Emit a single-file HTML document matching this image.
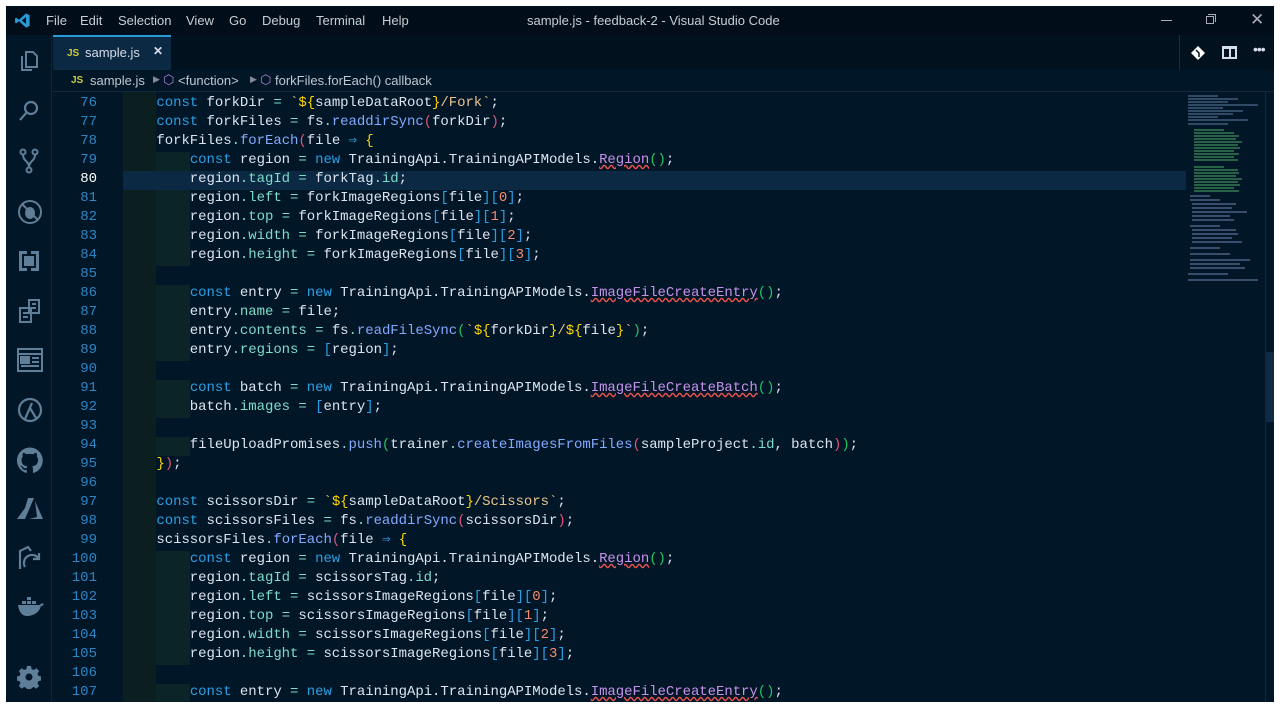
<!DOCTYPE html>
<html><head><meta charset="utf-8"><style>
*{margin:0;padding:0;box-sizing:border-box}
body{width:1280px;height:707px;background:#fff;position:relative;overflow:hidden;font-family:"Liberation Sans",sans-serif}
#win{position:absolute;left:6px;top:6px;width:1268px;height:696px;background:#011627;overflow:hidden}
#title{position:absolute;left:0;top:0;width:1268px;height:29px;background:#010e1a;color:#c8cdd3;font-size:13px}
#title .m{position:absolute;top:7px}
#act{position:absolute;left:0;top:29px;width:46px;height:667px;background:#011627;border-right:1px solid #0d2538}
#act svg{position:absolute;left:11px}
#tabs{position:absolute;left:47px;top:29px;right:0;height:35px;background:#01111d}
#tab{position:absolute;left:0;top:0;width:118px;height:35px;background:#0b2942;border-top:2px solid #2b9ad6;color:#d6deeb;font-size:13px}
#bc{position:absolute;left:47px;top:64px;right:0;height:22px;color:#c0c8d2;font-size:13px;border-bottom:1px solid #0f2a40}
.js{color:#cbcb41;font-weight:bold;font-size:10px}
#code{position:absolute;left:0;top:0;font-family:"Liberation Mono",monospace;font-size:14px;color:#d6deeb}
.ln{position:absolute;left:47px;width:44px;text-align:right;color:#2c86c6;font-family:"Liberation Mono",monospace;font-size:14px;height:19px;line-height:19px}
.l{position:absolute;left:117px;height:19px;line-height:19px;white-space:pre;letter-spacing:-0.05px}
.g2{position:absolute;left:150px;width:34px;height:19px;background:#0b2428}
.k{color:#2aa0e4}.p{color:#7fdbca}.f{color:#82aaff}.c{color:#c792ea;text-decoration:underline wavy #ef5350}
.s{color:#ecc48d}.o{color:#7fdbca}.y{color:#ffd700}.r{color:#e0557a}.u{color:#2aa0e4}.gn{color:#22c55e}.n{color:#f78c6c}
#mini{position:absolute;left:1180px;top:86px;width:78px;height:200px}
#sb{position:absolute;left:1259px;top:86px;width:9px;height:610px;border-left:1px solid #0f2a40}
#lines{position:absolute;left:0;top:2px;width:1268px;height:700px;font-family:'Liberation Mono',monospace;font-size:14px;color:#dde4ef}
</style></head><body><div id="win">
<div id="title">
<svg style="position:absolute;left:8px;top:6px" width="17" height="17" viewBox="0 0 24 24"><path d="M17 2 L22 4.5 V19.5 L17 22 L7 13 L3 16 L1.5 15 V9 L3 8 L7 11 Z M17 7 L11 12 L17 17 Z" fill="#2b9ad6"/></svg>
<span class="m" style="left:40px">File</span><span class="m" style="left:74px">Edit</span><span class="m" style="left:112px">Selection</span><span class="m" style="left:180px">View</span><span class="m" style="left:223px">Go</span><span class="m" style="left:256px">Debug</span><span class="m" style="left:310px">Terminal</span><span class="m" style="left:376px">Help</span>
<span class="m" style="left:521px">sample.js - feedback-2 - Visual Studio Code</span>
<div style="position:absolute;left:1155px;top:14px;width:11px;height:1px;background:#aab"></div>
<div style="position:absolute;left:1200px;top:10px;width:8px;height:8px;border:1px solid #aab"></div><div style="position:absolute;left:1202px;top:8px;width:8px;height:8px;border-top:1px solid #aab;border-right:1px solid #aab"></div>
<span class="m" style="left:1244px;top:4px;font-size:17px;color:#aab">✕</span>
</div>
<div id="act">
<svg style="top:14px" width="24" height="24" viewBox="0 0 24 24" fill="none" stroke="#5f7e97" stroke-width="2"><path d="M9 3h7l4 4v11H9z M5 7v14h10"/></svg>
<svg style="top:64px" width="24" height="24" viewBox="0 0 24 24" fill="none" stroke="#5f7e97" stroke-width="2.2"><circle cx="14" cy="9" r="6"/><path d="M10 13 L3 21"/></svg>
<svg style="top:113px" width="24" height="26" viewBox="0 0 24 26" fill="none" stroke="#5f7e97" stroke-width="2"><circle cx="6" cy="4" r="2.5"/><circle cx="18" cy="4" r="2.5"/><circle cx="12" cy="22" r="2.5"/><path d="M6 7c0 6 6 6 6 12M18 7c0 6-6 6-6 12"/></svg>
<svg style="top:164px" width="26" height="26" viewBox="0 0 26 26" fill="none" stroke="#5f7e97" stroke-width="2"><circle cx="13" cy="13" r="11"/><path d="M5 5l16 16"/><ellipse cx="13" cy="14" rx="4" ry="5" fill="#5f7e97"/></svg>
<svg style="top:214px" width="24" height="24" viewBox="0 0 24 24"><path d="M2 2h8v3H5v14h5v3H2zM14 2h8v20h-8v-3h5V5h-5z" fill="#5f7e97"/><rect x="7" y="7" width="10" height="10" fill="#5f7e97"/></svg>
<svg style="top:263px" width="24" height="26" viewBox="0 0 24 26" fill="none" stroke="#5f7e97" stroke-width="2"><rect x="3" y="10" width="11" height="14"/><rect x="12" y="2" width="10" height="13"/><path d="M6 15h5M6 19h5M15 6h4M15 10h4"/></svg>
<svg style="top:313px" width="26" height="24" viewBox="0 0 26 24" fill="none" stroke="#5f7e97" stroke-width="2"><rect x="1" y="1" width="24" height="22"/><path d="M1 6h24"/><rect x="4" y="9" width="8" height="6" fill="#5f7e97"/><path d="M15 10h7M15 14h7M4 18h18"/></svg>
<svg style="top:362px" width="26" height="26" viewBox="0 0 26 26" fill="none" stroke="#5f7e97" stroke-width="2.2"><circle cx="13" cy="13" r="11"/><path d="M8 22L15 6M13 11l6 10"/></svg>
<svg style="top:412px" width="26" height="26" viewBox="0 0 24 24"><path fill="#5f7e97" d="M12 .5a12 12 0 0 0-3.8 23.4c.6.1.8-.3.8-.6v-2.2c-3.3.7-4-1.4-4-1.4-.6-1.4-1.4-1.800-1.4-1.8-1-.7.1-.7.1-.7 1.2.1 1.8 1.2 1.8 1.2 1 1.8 2.8 1.3 3.5 1 .1-.8.4-1.3.7-1.600-2.7-.3-5.5-1.300-5.5-5.900 0-1.300.5-2.400 1.200-3.200-.1-.3-.5-1.500.1-3.200 0 0 1-.3 3.300 1.200a11.5 11.5 0 0 1 6 0c2.300-1.500 3.300-1.200 3.300-1.200.6 1.700.2 2.900.1 3.200.8.8 1.200 1.900 1.200 3.200 0 4.600-2.800 5.600-5.500 5.900.4.4.8 1.100.8 2.200v3.300c0 .3.2.7.8.6A12 12 0 0 0 12 .5z"/></svg>
<svg style="top:462px" width="26" height="24" viewBox="0 0 26 24"><path fill="#5f7e97" d="M11 1h6L8 22H0L8 11zM18 4l8 18H12l8-2z"/></svg>
<svg style="top:510px" width="26" height="26" viewBox="0 0 26 26" fill="none" stroke="#5f7e97" stroke-width="2.2"><path d="M3 24V6l8-4 3 4"/><path d="M8 22a8 8 0 0 1 14-8" /><path d="M22 8v6h-6" /></svg>
<svg style="top:560px" width="28" height="22" viewBox="0 0 28 22"><path fill="#5f7e97" d="M1 10h22c1-2 3-2 4-1-1 1-1 2-3 2-2 7-8 10-14 10-5 0-8-4-9-11z"/><path fill="#5f7e97" d="M5 6h4v3H5zM10 6h4v3h-4zM15 6h4v3h-4zM10 2h4v3h-4z"/></svg>
<svg style="top:630px" width="24" height="24" viewBox="0 0 24 24"><path fill="#5f7e97" d="M10 1h4l.6 3 2.2 1 2.6-1.7 2.8 2.8-1.7 2.6 1 2.2 3 .6v4l-3 .6-1 2.2 1.7 2.6-2.8 2.8-2.6-1.7-2.2 1-.6 3h-4l-.6-3-2.2-1-2.6 1.7-2.8-2.8 1.7-2.6-1-2.2-3-.6v-4l3-.6 1-2.2-1.7-2.6 2.8-2.8 2.6 1.7 2.2-1z"/><circle cx="12" cy="12" r="3.5" fill="#011627"/></svg>
</div>
<div id="tabs"><div id="tab"><span class="js" style="position:absolute;left:14px;top:11px">JS</span><span style="position:absolute;left:32px;top:8px">sample.js</span><span style="position:absolute;left:100px;top:7px;font-size:12px;font-weight:bold">✕</span></div>
<svg style="position:absolute;left:1138px;top:11px" width="14" height="14" viewBox="0 0 14 14"><path d="M7 0L14 7 7 14 0 7z" fill="#fff"/><path d="M5 4l3 3v4" stroke="#01111d" stroke-width="1.5" fill="none"/></svg>
<div style="position:absolute;left:1169px;top:11px;width:15px;height:13px;border:2px solid #d6deeb;border-top-width:3px"></div><div style="position:absolute;left:1176px;top:12px;width:2px;height:12px;background:#d6deeb"></div>
<span style="position:absolute;left:1200px;top:6px;color:#d6deeb;font-size:14px;letter-spacing:-1px">•••</span>
<div style="position:absolute;left:1126px;top:0;width:1px;height:35px;background:#12304a"></div>
</div>
<div id="bc"><span class="js" style="position:absolute;left:18px;top:5px">JS</span><span style="position:absolute;left:37px;top:3px">sample.js</span><span style="position:absolute;left:100px;top:4px;font-size:9px;color:#889">▶</span><span style="position:absolute;left:110px;top:2px;color:#b180d7">⬡</span><span style="position:absolute;left:125px;top:3px">&lt;function&gt;</span><span style="position:absolute;left:197px;top:4px;font-size:9px;color:#889">▶</span><span style="position:absolute;left:207px;top:2px;color:#b180d7">⬡</span><span style="position:absolute;left:222px;top:3px">forkFiles.forEach() callback</span></div>
<div id="code">
<div style="position:absolute;left:117px;top:86px;width:33px;height:610px;background:#0c1f20"></div>
<div class="g2" style="top:146px;height:114px"></div><div class="g2" style="top:279px;height:76px"></div><div class="g2" style="top:374px;height:38px"></div><div class="g2" style="top:431px;height:19px"></div>
<div class="g2" style="top:545px;height:114px"></div><div class="g2" style="top:678px;height:19px"></div>
<div style="position:absolute;left:117px;top:165px;width:1063px;height:19px;background:#0b2942"></div>
</div>
<div id="lines">
<div class="ln" style="top:86px">76</div><div class="l" style="top:86px">    <span class="k">const</span> forkDir <span class="o">=</span> <span class="s">`</span><span class="y">${</span>sampleDataRoot<span class="y">}</span><span class="s">/Fork`</span>;</div>
<div class="ln" style="top:105px">77</div><div class="l" style="top:105px">    <span class="k">const</span> forkFiles <span class="o">=</span> fs<span class="p">.</span><span class="f">readdirSync</span><span class="r">(</span>forkDir<span class="r">)</span>;</div>
<div class="ln" style="top:124px">78</div><div class="l" style="top:124px">    forkFiles<span class="p">.</span><span class="f">forEach</span><span class="r">(</span>file <span class="u">⇒</span> <span class="y">{</span></div>
<div class="ln" style="top:143px">79</div><div class="l" style="top:143px">        <span class="k">const</span> region <span class="o">=</span> <span class="k">new</span> TrainingApi.TrainingAPIModels.<span class="c">Region</span><span class="gn">()</span>;</div>
<div class="ln" style="top:162px;color:#fff">80</div><div class="l" style="top:162px">        region<span class="p">.tagId</span> <span class="o">=</span> forkTag<span class="p">.id</span>;</div>
<div class="ln" style="top:181px">81</div><div class="l" style="top:181px">        region<span class="p">.left</span> <span class="o">=</span> forkImageRegions<span class="u">[</span>file<span class="u">][</span><span class="n">0</span><span class="u">]</span>;</div>
<div class="ln" style="top:200px">82</div><div class="l" style="top:200px">        region<span class="p">.top</span> <span class="o">=</span> forkImageRegions<span class="u">[</span>file<span class="u">][</span><span class="n">1</span><span class="u">]</span>;</div>
<div class="ln" style="top:219px">83</div><div class="l" style="top:219px">        region<span class="p">.width</span> <span class="o">=</span> forkImageRegions<span class="u">[</span>file<span class="u">][</span><span class="n">2</span><span class="u">]</span>;</div>
<div class="ln" style="top:238px">84</div><div class="l" style="top:238px">        region<span class="p">.height</span> <span class="o">=</span> forkImageRegions<span class="u">[</span>file<span class="u">][</span><span class="n">3</span><span class="u">]</span>;</div>
<div class="ln" style="top:257px">85</div>
<div class="ln" style="top:276px">86</div><div class="l" style="top:276px">        <span class="k">const</span> entry <span class="o">=</span> <span class="k">new</span> TrainingApi.TrainingAPIModels.<span class="c">ImageFileCreateEntry</span><span class="gn">()</span>;</div>
<div class="ln" style="top:295px">87</div><div class="l" style="top:295px">        entry<span class="p">.name</span> <span class="o">=</span> file;</div>
<div class="ln" style="top:314px">88</div><div class="l" style="top:314px">        entry<span class="p">.contents</span> <span class="o">=</span> fs<span class="p">.</span><span class="f">readFileSync</span><span class="gn">(</span><span class="s">`</span><span class="y">${</span>forkDir<span class="y">}</span><span class="s">/</span><span class="y">${</span>file<span class="y">}</span><span class="s">`</span><span class="gn">)</span>;</div>
<div class="ln" style="top:333px">89</div><div class="l" style="top:333px">        entry<span class="p">.regions</span> <span class="o">=</span> <span class="u">[</span>region<span class="u">]</span>;</div>
<div class="ln" style="top:352px">90</div>
<div class="ln" style="top:371px">91</div><div class="l" style="top:371px">        <span class="k">const</span> batch <span class="o">=</span> <span class="k">new</span> TrainingApi.TrainingAPIModels.<span class="c">ImageFileCreateBatch</span><span class="gn">()</span>;</div>
<div class="ln" style="top:390px">92</div><div class="l" style="top:390px">        batch<span class="p">.images</span> <span class="o">=</span> <span class="u">[</span>entry<span class="u">]</span>;</div>
<div class="ln" style="top:409px">93</div>
<div class="ln" style="top:428px">94</div><div class="l" style="top:428px">        fileUploadPromises<span class="p">.</span><span class="f">push</span><span class="gn">(</span>trainer<span class="p">.</span><span class="f">createImagesFromFiles</span><span class="r">(</span>sampleProject<span class="p">.id</span>, batch<span class="r">)</span><span class="gn">)</span>;</div>
<div class="ln" style="top:447px">95</div><div class="l" style="top:447px">    <span class="y">}</span><span class="r">)</span>;</div>
<div class="ln" style="top:466px">96</div>
<div class="ln" style="top:485px">97</div><div class="l" style="top:485px">    <span class="k">const</span> scissorsDir <span class="o">=</span> <span class="s">`</span><span class="y">${</span>sampleDataRoot<span class="y">}</span><span class="s">/Scissors`</span>;</div>
<div class="ln" style="top:504px">98</div><div class="l" style="top:504px">    <span class="k">const</span> scissorsFiles <span class="o">=</span> fs<span class="p">.</span><span class="f">readdirSync</span><span class="r">(</span>scissorsDir<span class="r">)</span>;</div>
<div class="ln" style="top:523px">99</div><div class="l" style="top:523px">    scissorsFiles<span class="p">.</span><span class="f">forEach</span><span class="r">(</span>file <span class="u">⇒</span> <span class="y">{</span></div>
<div class="ln" style="top:542px">100</div><div class="l" style="top:542px">        <span class="k">const</span> region <span class="o">=</span> <span class="k">new</span> TrainingApi.TrainingAPIModels.<span class="c">Region</span><span class="gn">()</span>;</div>
<div class="ln" style="top:561px">101</div><div class="l" style="top:561px">        region<span class="p">.tagId</span> <span class="o">=</span> scissorsTag<span class="p">.id</span>;</div>
<div class="ln" style="top:580px">102</div><div class="l" style="top:580px">        region<span class="p">.left</span> <span class="o">=</span> scissorsImageRegions<span class="u">[</span>file<span class="u">][</span><span class="n">0</span><span class="u">]</span>;</div>
<div class="ln" style="top:599px">103</div><div class="l" style="top:599px">        region<span class="p">.top</span> <span class="o">=</span> scissorsImageRegions<span class="u">[</span>file<span class="u">][</span><span class="n">1</span><span class="u">]</span>;</div>
<div class="ln" style="top:618px">104</div><div class="l" style="top:618px">        region<span class="p">.width</span> <span class="o">=</span> scissorsImageRegions<span class="u">[</span>file<span class="u">][</span><span class="n">2</span><span class="u">]</span>;</div>
<div class="ln" style="top:637px">105</div><div class="l" style="top:637px">        region<span class="p">.height</span> <span class="o">=</span> scissorsImageRegions<span class="u">[</span>file<span class="u">][</span><span class="n">3</span><span class="u">]</span>;</div>
<div class="ln" style="top:656px">106</div>
<div class="ln" style="top:675px">107</div><div class="l" style="top:675px">        <span class="k">const</span> entry <span class="o">=</span> <span class="k">new</span> TrainingApi.TrainingAPIModels.<span class="c">ImageFileCreateEntry</span><span class="gn">()</span>;</div>
</div>
<svg id="mini" viewBox="0 0 78 200">
<g stroke-width="1.2">
<path d="M2 4h30M2 7h50M2 10h40M2 13h70M2 16h35M2 19h55M2 22h45M2 25h30M2 28h60M2 32h40" stroke="#4a6a8a"/>
<path d="M8 38h30M8 41h40M8 44h45M8 47h42M8 50h48M8 53h44M8 56h46M8 59h40M8 62h45M8 65h40M8 68h44" stroke="#3f8f5a"/>
<path d="M8 75h30M8 78h44M8 81h45M8 84h42M8 87h48M8 90h44M8 93h46M8 96h40M8 99h45" stroke="#3f8f5a"/>
<path d="M4 104h20M4 108h30M6 112h44M6 116h40M6 120h55M6 124h38M6 128h42M4 134h30M6 138h44M6 142h46M6 146h40M6 150h50M4 156h30M4 162h40M4 168h60M4 172h50M4 176h55M2 182h40M2 188h70" stroke="#5a6f95"/>
</g></svg>
<div id="sb"><div style="position:absolute;left:0;top:260px;width:9px;height:70px;background:#0f2a44"></div></div>
</div></body></html>
